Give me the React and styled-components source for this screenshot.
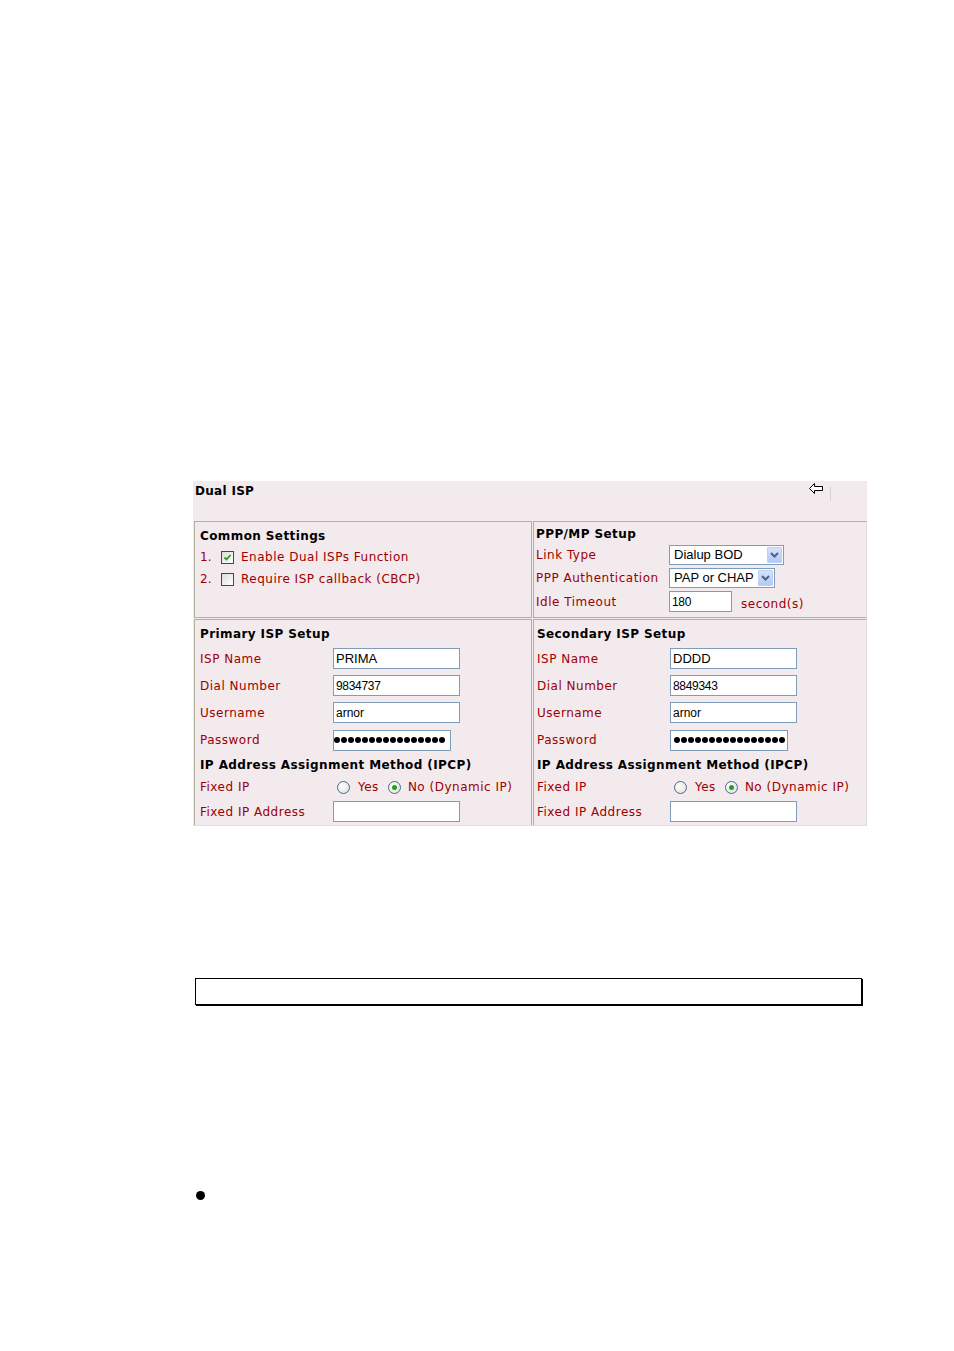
import styled, { createGlobalStyle } from "styled-components";

const GlobalStyle = createGlobalStyle`
  body {
    margin: 0;
    background: #ffffff;
  }
`;

const Page = styled.div`
  padding: 481px 0 140px 193px;
  font-family: "DejaVu Sans", Verdana, sans-serif;
`;

const Panel = styled.section`
  width: 674px;
  background: #f2eaed;
`;

const Header = styled.div`
  height: 40px;
  display: flex;
  justify-content: space-between;
  align-items: flex-start;
  padding: 2px 36px 0 2px;
  box-sizing: border-box;
`;

const PanelTitle = styled.h1`
  margin: 0;
  font-size: 12px;
  font-weight: bold;
  letter-spacing: 0.3px;
  line-height: 16px;
  color: #000;
`;

const HeaderTools = styled.div`
  display: flex;
  align-items: flex-start;
  gap: 7px;
`;

const Divider = styled.span`
  width: 1px;
  height: 14px;
  margin-top: 4px;
  background: #d8cfd3;
`;

const Grid = styled.div`
  display: grid;
  grid-template-columns: 338px 334px;
  gap: 1px;
  padding: 0 1px;
`;

const Cell = styled.div`
  border: 1px solid #b4b09f;
  border-bottom-color: ${(p) => (p.$last ? "#e4dcd8" : "#b4b09f")};
  border-right-color: ${(p) => (p.$edge ? "#e4dcd8" : "#b4b09f")};
  padding: ${(p) => p.$pad};
  height: ${(p) => p.$h}px;
  box-sizing: border-box;
`;

const Row = styled.div`
  display: flex;
  align-items: center;
  height: ${(p) => p.$h}px;
`;

const SectionTitle = styled.div`
  font-size: 12px;
  font-weight: bold;
  letter-spacing: 0.4px;
  color: #000;
  white-space: nowrap;
`;

const Label = styled.span`
  width: ${(p) => p.$w || 133}px;
  flex: none;
  font-size: 12px;
  letter-spacing: 0.5px;
  color: #9c0000;
  white-space: nowrap;
`;

const Text = styled.span`
  font-size: 12px;
  letter-spacing: 0.5px;
  color: #9c0000;
  white-space: nowrap;
  margin-left: ${(p) => p.$ml || 0}px;
  margin-top: ${(p) => p.$mt || 0}px;
`;

const TextInput = styled.input`
  width: ${(p) => p.$w || 127}px;
  height: 21px;
  box-sizing: border-box;
  border: 1px solid #7f9db9;
  background: #fff;
  padding: 0 2px;
  margin: 0;
  font-family: "Liberation Sans", Arial, sans-serif;
  font-size: ${(p) => p.$fs || 12}px;
  letter-spacing: ${(p) => (p.$tight ? "-0.3px" : "0")};
  color: #000;
  outline: none;
`;

const PasswordBox = styled.div`
  width: ${(p) => p.$w}px;
  height: 21px;
  box-sizing: border-box;
  border: 1px solid #7f9db9;
  background: #fff;
  display: flex;
  align-items: center;
  gap: 1px;
  padding-left: ${(p) => p.$pl}px;
  overflow: hidden;
`;

const Dot = styled.span`
  flex: none;
  width: 6px;
  height: 6px;
  border-radius: 50%;
  background: #000;
`;

const SelectBox = styled.div`
  width: ${(p) => p.$w}px;
  height: 20px;
  box-sizing: border-box;
  border: 1px solid #7f9db9;
  background: #fff;
  display: flex;
  align-items: center;
  justify-content: space-between;
  padding: 0 1px 0 4px;
  font-family: "Liberation Sans", Arial, sans-serif;
  font-size: 13px;
  color: #000;
`;

const SelectButton = styled.span`
  width: 15px;
  height: 16px;
  box-sizing: border-box;
  border: 1px solid #bcd0f5;
  border-radius: 1px;
  background: linear-gradient(#d6e2fc, #b4c8f6);
  display: flex;
  align-items: center;
  justify-content: center;
`;

const Num = styled.span`
  width: 21px;
  flex: none;
  font-size: 12px;
  color: #9c0000;
`;

const Box = styled.span`
  width: 13px;
  height: 13px;
  box-sizing: border-box;
  border: 1px solid #1c5180;
  background: linear-gradient(135deg, #dcdcd7, #ffffff);
  display: inline-flex;
  align-items: center;
  justify-content: center;
  margin-right: 7px;
  flex: none;
`;

const Radio = styled.span`
  width: 13px;
  height: 13px;
  box-sizing: border-box;
  border-radius: 50%;
  border: 1px solid #4a6a88;
  background: radial-gradient(circle at 35% 35%, #ffffff, #dcdcd7);
  display: inline-flex;
  align-items: center;
  justify-content: center;
  flex: none;
  margin-left: ${(p) => p.$ml || 0}px;

  &::after {
    content: "";
    width: 5px;
    height: 5px;
    border-radius: 50%;
    background: ${(p) => (p.$on ? "#21a121" : "transparent")};
  }
`;

const BottomBox = styled.div`
  margin: 152px 0 0 2px;
  width: 667px;
  height: 27px;
  box-sizing: border-box;
  border: 1px solid #000;
  box-shadow: 1px 1px 0 #000;
`;

const Bullet = styled.div`
  width: 9px;
  height: 9px;
  border-radius: 50%;
  background: #000;
  margin: 186px 0 0 3px;
`;

const BackArrow = () => (
  <svg width="14" height="12" viewBox="0 0 14 12">
    <path
      d="M0.5 5.5 L5.5 0.5 L5.5 3.5 L13.5 3.5 L13.5 7.5 L5.5 7.5 L5.5 10.5 Z"
      fill="#fff"
      stroke="#000"
      strokeWidth="1"
    />
  </svg>
);

const Chevron = () => (
  <svg width="9" height="6" viewBox="0 0 9 6">
    <path d="M1 1 L4.5 4.5 L8 1" fill="none" stroke="#4d6185" strokeWidth="2" />
  </svg>
);

const Check = () => (
  <svg width="9" height="9" viewBox="0 0 9 9">
    <path d="M1.5 4.5 L3.5 6.5 L7.5 2" fill="none" stroke="#21a121" strokeWidth="1.8" />
  </svg>
);

const Select = ({ w, value }) => (
  <SelectBox $w={w}>
    <span>{value}</span>
    <SelectButton>
      <Chevron />
    </SelectButton>
  </SelectBox>
);

const Password = ({ w, pl }) => (
  <PasswordBox $w={w} $pl={pl}>
    {Array.from({ length: 16 }).map((_, i) => (
      <Dot key={i} />
    ))}
  </PasswordBox>
);

const IspSetup = ({ title, name, dial, pwPad }) => (
  <>
    <Row $h={22}>
      <SectionTitle>{title}</SectionTitle>
    </Row>
    <Row $h={27}>
      <Label>ISP Name</Label>
      <TextInput readOnly value={name} $fs={13} />
    </Row>
    <Row $h={27}>
      <Label>Dial Number</Label>
      <TextInput readOnly value={dial} $tight />
    </Row>
    <Row $h={27}>
      <Label>Username</Label>
      <TextInput readOnly value="arnor" $fs={12} />
    </Row>
    <Row $h={28}>
      <Label>Password</Label>
      <Password w={118} pl={pwPad} />
    </Row>
    <Row $h={22}>
      <SectionTitle>IP Address Assignment Method (IPCP)</SectionTitle>
    </Row>
    <Row $h={22}>
      <Label>Fixed IP</Label>
      <Radio $ml={4} />
      <Text $ml={8}>Yes</Text>
      <Radio $ml={9} $on />
      <Text $ml={7}>No (Dynamic IP)</Text>
    </Row>
    <Row $h={27}>
      <Label>Fixed IP Address</Label>
      <TextInput readOnly value="" />
    </Row>
  </>
);

const App = () => (
  <Page>
    <GlobalStyle />
    <Panel>
      <Header>
        <PanelTitle>Dual ISP</PanelTitle>
        <HeaderTools>
          <BackArrow />
          <Divider />
        </HeaderTools>
      </Header>
      <Grid>
        <Cell $h={97} $pad="3px 0 0 5px">
          <Row $h={21}>
            <SectionTitle>Common Settings</SectionTitle>
          </Row>
          <Row $h={22}>
            <Num>1.</Num>
            <Box>
              <Check />
            </Box>
            <Text>Enable Dual ISPs Function</Text>
          </Row>
          <Row $h={22}>
            <Num>2.</Num>
            <Box />
            <Text>Require ISP callback (CBCP)</Text>
          </Row>
        </Cell>
        <Cell $h={97} $pad="3px 0 0 2px" $edge>
          <Row $h={18}>
            <SectionTitle>PPP/MP Setup</SectionTitle>
          </Row>
          <Row $h={23}>
            <Label>Link Type</Label>
            <Select w={115} value="Dialup BOD" />
          </Row>
          <Row $h={23}>
            <Label>PPP Authentication</Label>
            <Select w={106} value="PAP or CHAP" />
          </Row>
          <Row $h={25}>
            <Label>Idle Timeout</Label>
            <TextInput readOnly value="180" $w={63} $tight />
            <Text $ml={9} $mt={4}>second(s)</Text>
          </Row>
        </Cell>
        <Cell $h={207} $pad="3px 0 0 5px" $last>
          <IspSetup title="Primary ISP Setup" name="PRIMA" dial="9834737" pwPad={0} />
        </Cell>
        <Cell $h={207} $pad="3px 0 0 3px" $last $edge>
          <IspSetup title="Secondary ISP Setup" name="DDDD" dial="8849343" pwPad={3} />
        </Cell>
      </Grid>
    </Panel>
    <BottomBox />
    <Bullet />
  </Page>
);

export default App;
